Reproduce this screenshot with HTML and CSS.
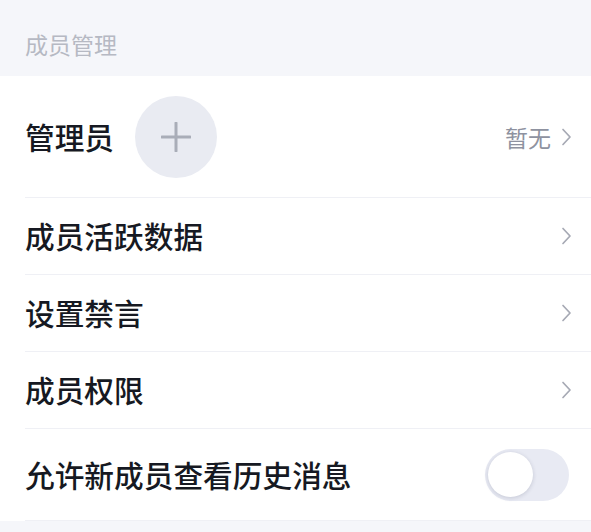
FILE: index.html
```html
<!DOCTYPE html>
<html lang="zh-CN">
<head>
<meta charset="utf-8">
<title>成员管理</title>
<link rel="stylesheet" href="styles.css">
</head>
<body>
<div class="page">
  <div class="section-title">成员管理</div>
  <div class="list">
    <div class="row row-admin">
      <span class="label">管理员</span>
      <span class="add-btn">
        <svg width="30" height="30" viewBox="0 0 30 30"><path d="M15 1V29M1 15H29" stroke="#a9adb8" stroke-width="3" stroke-linecap="round" fill="none"/></svg>
      </span>
      <span class="spacer"></span>
      <span class="value">暂无</span>
      <svg class="chev" width="11" height="18" viewBox="0 0 11 18"><path d="M2 1.5L9 9L2 16.5" stroke="#a6a9b4" stroke-width="1.7" fill="none" stroke-linecap="round" stroke-linejoin="round"/></svg>
    </div>
    <div class="row">
      <span class="label">成员活跃数据</span>
      <span class="spacer"></span>
      <svg class="chev" width="11" height="18" viewBox="0 0 11 18"><path d="M2 1.5L9 9L2 16.5" stroke="#a6a9b4" stroke-width="1.7" fill="none" stroke-linecap="round" stroke-linejoin="round"/></svg>
    </div>
    <div class="row">
      <span class="label">设置禁言</span>
      <span class="spacer"></span>
      <svg class="chev" width="11" height="18" viewBox="0 0 11 18"><path d="M2 1.5L9 9L2 16.5" stroke="#a6a9b4" stroke-width="1.7" fill="none" stroke-linecap="round" stroke-linejoin="round"/></svg>
    </div>
    <div class="row">
      <span class="label">成员权限</span>
      <span class="spacer"></span>
      <svg class="chev" width="11" height="18" viewBox="0 0 11 18"><path d="M2 1.5L9 9L2 16.5" stroke="#a6a9b4" stroke-width="1.7" fill="none" stroke-linecap="round" stroke-linejoin="round"/></svg>
    </div>
    <div class="row row-switch">
      <span class="label">允许新成员查看历史消息</span>
      <span class="spacer"></span>
      <span class="switch"><span class="knob"></span></span>
    </div>
  </div>
</div>
</body>
</html>
```

FILE: styles.css
```css
html, body {
  margin: 0;
  padding: 0;
  background: #f5f6fa;
}

.page {
  font-family: "Noto Sans CJK SC", "Noto Sans", sans-serif;
  width: 591px;
}

.section-title {
  height: 76px;
  box-sizing: border-box;
  padding: 30px 0 0 25px;
  font-size: 23px;
  line-height: 28px;
  color: #b6b9c3;
}

.list {
  background: #ffffff;
  padding-left: 25px;
}

.row {
  display: flex;
  align-items: center;
  height: 76px;
  border-bottom: 1px solid #eff0f5;
  padding-right: 19px;
}

.row-admin {
  height: 121px;
}

.row-switch {
  height: 91px;
  padding-right: 22px;
}

.label {
  font-size: 29.7px;
  line-height: 36px;
  font-weight: 500;
  color: #161922;
}

.spacer {
  flex: 1;
}

.add-btn {
  width: 82px;
  height: 82px;
  border-radius: 50%;
  background: #e9ebf2;
  margin-left: 21px;
  display: flex;
  align-items: center;
  justify-content: center;
}

.value {
  font-size: 23px;
  line-height: 28px;
  color: #8e92a0;
  margin-right: 10px;
}

.chev {
  display: block;
}

.switch {
  width: 84px;
  height: 52px;
  border-radius: 26px;
  background: #e8eaf3;
  display: flex;
  align-items: center;
  padding-left: 3px;
  box-sizing: border-box;
}

.knob {
  width: 45px;
  height: 45px;
  border-radius: 50%;
  background: #ffffff;
  box-shadow: 0 1px 4px rgba(40, 45, 80, 0.18);
}
```
